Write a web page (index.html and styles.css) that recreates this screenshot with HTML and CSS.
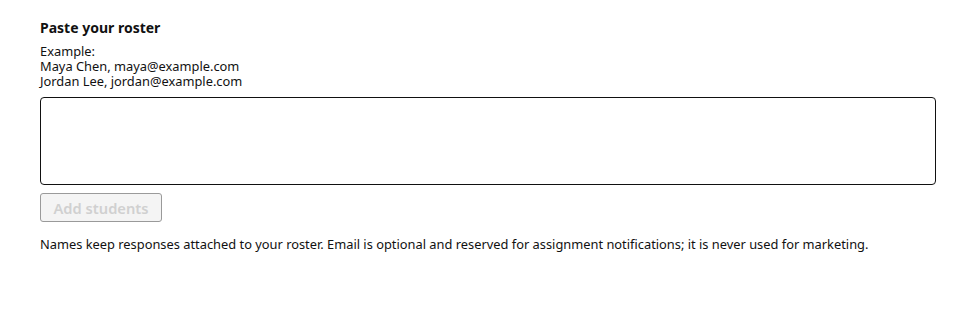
FILE: index.html
```html
<!DOCTYPE html>
<html lang="en">
<head>
<meta charset="utf-8">
<title>Paste your roster</title>
<link rel="stylesheet" href="styles.css">
</head>
<body>
<section class="roster">
  <label class="title" for="roster-input">Paste your roster</label>
  <div class="example">Example:<br>Maya Chen, maya@example.com<br>Jordan Lee, jordan@example.com</div>
  <textarea id="roster-input" class="input"></textarea>
  <button class="add" disabled>Add students</button>
  <p class="note">Names keep responses attached to your roster. Email is optional and reserved for assignment notifications; it is never used for marketing.</p>
</section>
</body>
</html>
```
FILE: styles.css
```css
html, body { margin: 0; background: #fff; }
body { font-family: "Noto Sans", "Open Sans", sans-serif; color: #111; }
.roster { padding: 18px 40px 0 40px; display: flex; flex-direction: column; align-items: flex-start; }
.title { font-size: 14px; font-weight: 700; line-height: 20px; }
.example { font-size: 12.85px; line-height: 15px; margin-top: 6px; }
.input { box-sizing: border-box; width: 896px; height: 88px; margin-top: 8px; border: 1px solid #111; border-radius: 4px; resize: none; font: inherit; }
.add { box-sizing: border-box; margin-top: 8px; height: 29px; width: 122px; font-family: inherit; font-size: 14.7px; font-weight: 600; color: #d0d0d0; background: #f4f4f4; border: 1px solid #9a9a9a; border-radius: 3px; padding: 0; }
.note { font-size: 12.85px; line-height: 16px; margin: 14px 0 0 0; }
```
